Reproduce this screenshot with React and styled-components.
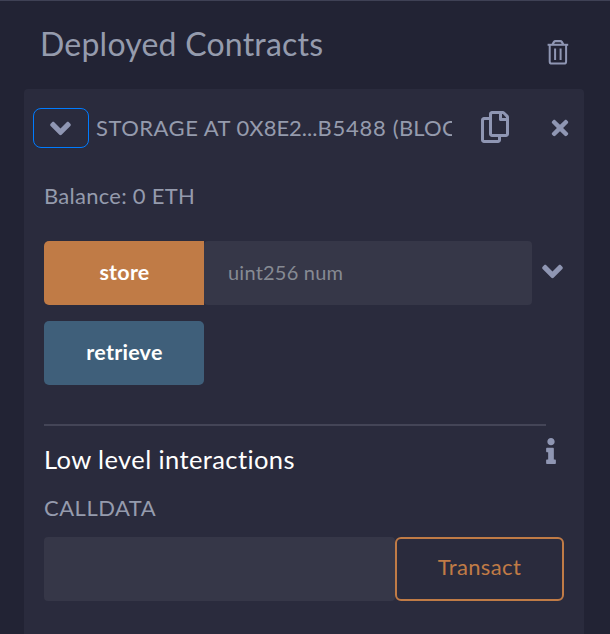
import React from "react";
import styled, { createGlobalStyle } from "styled-components";
import { FaAngleDown, FaRegCopy, FaTimes, FaInfo } from "react-icons/fa";

const GlobalStyle = createGlobalStyle`
  *, *::before, *::after { box-sizing: border-box; }
  body {
    margin: 0;
    background: #222334;
    font-family: Lato, "Liberation Sans", sans-serif;
    font-variant-ligatures: none;
    overflow: hidden;
  }
  button, input { font-family: inherit; margin: 0; }
`;

const Panel = styled.main`
  display: flex;
  flex-direction: column;
  width: 610px;
  height: 634px;
  padding: 0 26px 0 24px;
  border-top: 1px solid #3f4155;
  background: #222334;
  overflow: hidden;
`;

const PanelHeader = styled.header`
  display: flex;
  flex: none;
  justify-content: space-between;
  height: 88px;
  padding: 23px 15px 0 16px;
`;

const Title = styled.h1`
  margin: 0;
  font-size: 32px;
  font-weight: 400;
  line-height: 40px;
  letter-spacing: 0.22px;
  color: #959bad;
  white-space: nowrap;
`;

const IconButton = styled.button`
  display: flex;
  flex: none;
  align-items: center;
  justify-content: center;
  width: ${(p) => p.$w}px;
  height: ${(p) => p.$h}px;
  padding: 0;
  border: 0;
  background: none;
  color: #8f96b3;
  svg { flex: none; }
`;

const TrashButton = styled(IconButton)`
  margin-top: 15px;
`;

const Card = styled.section`
  display: flex;
  flex: none;
  flex-direction: column;
  height: 560px;
  border-radius: 4px;
  background: #2a2b3d;
`;

const CardHeader = styled.div`
  display: flex;
  align-items: center;
  height: 40px;
  margin: 19px 15px 0 9px;
`;

const Toggle = styled(IconButton)`
  padding-right: 2px;
  border: 1px solid #007bff;
  border-radius: 8px;
`;

const Name = styled.span`
  flex: none;
  width: 356px;
  margin: 0 27px 0 7px;
  overflow: hidden;
  font-size: 22px;
  line-height: 40px;
  color: #959bad;
  white-space: pre;
`;

const NamePart = styled.span`
  letter-spacing: ${(p) => p.$spacing}px;
`;

const CopyButton = styled(IconButton)`
  margin-bottom: 2px;
`;

const CloseButton = styled(IconButton)`
  margin-left: auto;
`;

const CardBody = styled.div`
  display: flex;
  flex-direction: column;
  padding: 0 20px;
`;

const Balance = styled.div`
  margin: 33px 0 30px;
  font-size: 22px;
  line-height: 30px;
  letter-spacing: 0.27px;
  color: #959bad;
`;

const Row = styled.div`
  display: flex;
  height: 64px;
  margin-bottom: ${(p) => p.$gap || 0}px;
`;

const CallButton = styled.button`
  flex: none;
  width: 160px;
  padding: 0 0 2px 1px;
  border: 0;
  border-radius: ${(p) => (p.$joined ? "5px 0 0 5px" : "5px")};
  background: ${(p) => p.$color};
  font-size: 21.5px;
  font-weight: 700;
  line-height: 62px;
  letter-spacing: 0.25px;
  color: #fff;
`;

const Field = styled.input`
  flex: none;
  width: ${(p) => p.$w}px;
  padding: 0 24px 2px;
  border: 0;
  border-radius: 4px;
  background: #363748;
  font-size: 20px;
  letter-spacing: 0.22px;
  color: #fff;
  &::placeholder { color: #868a93; opacity: 1; }
`;

const Expand = styled(IconButton)`
  margin: 16px 0 0 6px;
`;

const Divider = styled.hr`
  width: 502px;
  height: 2px;
  margin: 39px 0 0;
  border: 0;
  background: #444557;
`;

const SectionHeader = styled.div`
  display: flex;
  justify-content: space-between;
  height: 66px;
  padding: 17px 6px 0 0;
`;

const SectionTitle = styled.h2`
  margin: 0;
  font-size: 25.5px;
  font-weight: 400;
  line-height: 32px;
  letter-spacing: 0.4px;
  color: #fff;
`;

const InfoButton = styled(IconButton)`
  margin-top: -5px;
`;

const FieldLabel = styled.label`
  height: 45px;
  font-size: 22px;
  line-height: 32px;
  letter-spacing: 0.5px;
  color: #959bad;
`;

const TransactButton = styled.button`
  flex: none;
  width: 169px;
  padding: 0 0 5px;
  border: 2px solid #c07b46;
  border-radius: 6px;
  background: none;
  font-size: 22px;
  letter-spacing: 0.35px;
  color: #c07b46;
`;

const TrashIcon = () => (
  <svg width="22" height="26" viewBox="0 0 22 26" fill="none" stroke="currentColor" strokeWidth="2" strokeLinejoin="round">
    <path d="M.6 5.8h20.6" />
    <path d="M5.6 5.4L7 2.9Q7.5 2.1 8.5 2.1h4.8q1 0 1.5.8l1.4 2.5" strokeWidth="2.2" />
    <path d="M2.7 5.8v16.6q0 2.2 2.2 2.2h12q2.2 0 2.2-2.2V5.8" />
    <path d="M8.1 9.5v11.5M13.6 9.5v11.5" />
  </svg>
);

export default function App() {
  return (
    <>
      <GlobalStyle />
      <Panel>
        <PanelHeader>
          <Title>Deployed Contracts</Title>
          <TrashButton $w={22} $h={26} aria-label="Clear contracts">
            <TrashIcon />
          </TrashButton>
        </PanelHeader>
        <Card>
          <CardHeader>
            <Toggle $w={56} $h={40} aria-label="Toggle contract">
              <FaAngleDown size={33} />
            </Toggle>
            <Name>
              <NamePart $spacing={0.5}>{"STORAGE AT "}</NamePart>
              <NamePart $spacing={0}>0X8E2...</NamePart>
              <NamePart $spacing={0.75}>{"B5488 "}</NamePart>
              <NamePart $spacing={0.2}>(BLOC</NamePart>
            </Name>
            <CopyButton $w={32} $h={32} aria-label="Copy address">
              <FaRegCopy size={32} />
            </CopyButton>
            <CloseButton $w={18} $h={24} aria-label="Remove contract">
              <FaTimes size={24} />
            </CloseButton>
          </CardHeader>
          <CardBody>
            <Balance>Balance: 0 ETH</Balance>
            <Row $gap={16}>
              <CallButton $joined $color="#c07b46">store</CallButton>
              <Field $w={328} placeholder="uint256 num" />
              <Expand $w={28} $h={28} aria-label="Expand inputs">
                <FaAngleDown size={33} />
              </Expand>
            </Row>
            <Row>
              <CallButton $color="#3f5f7a">retrieve</CallButton>
            </Row>
            <Divider />
            <SectionHeader>
              <SectionTitle>Low level interactions</SectionTitle>
              <InfoButton $w={14} $h={26} aria-label="Documentation">
                <FaInfo size={26} />
              </InfoButton>
            </SectionHeader>
            <FieldLabel htmlFor="calldata">CALLDATA</FieldLabel>
            <Row>
              <Field id="calldata" $w={351} />
              <TransactButton>Transact</TransactButton>
            </Row>
          </CardBody>
        </Card>
      </Panel>
    </>
  );
}
